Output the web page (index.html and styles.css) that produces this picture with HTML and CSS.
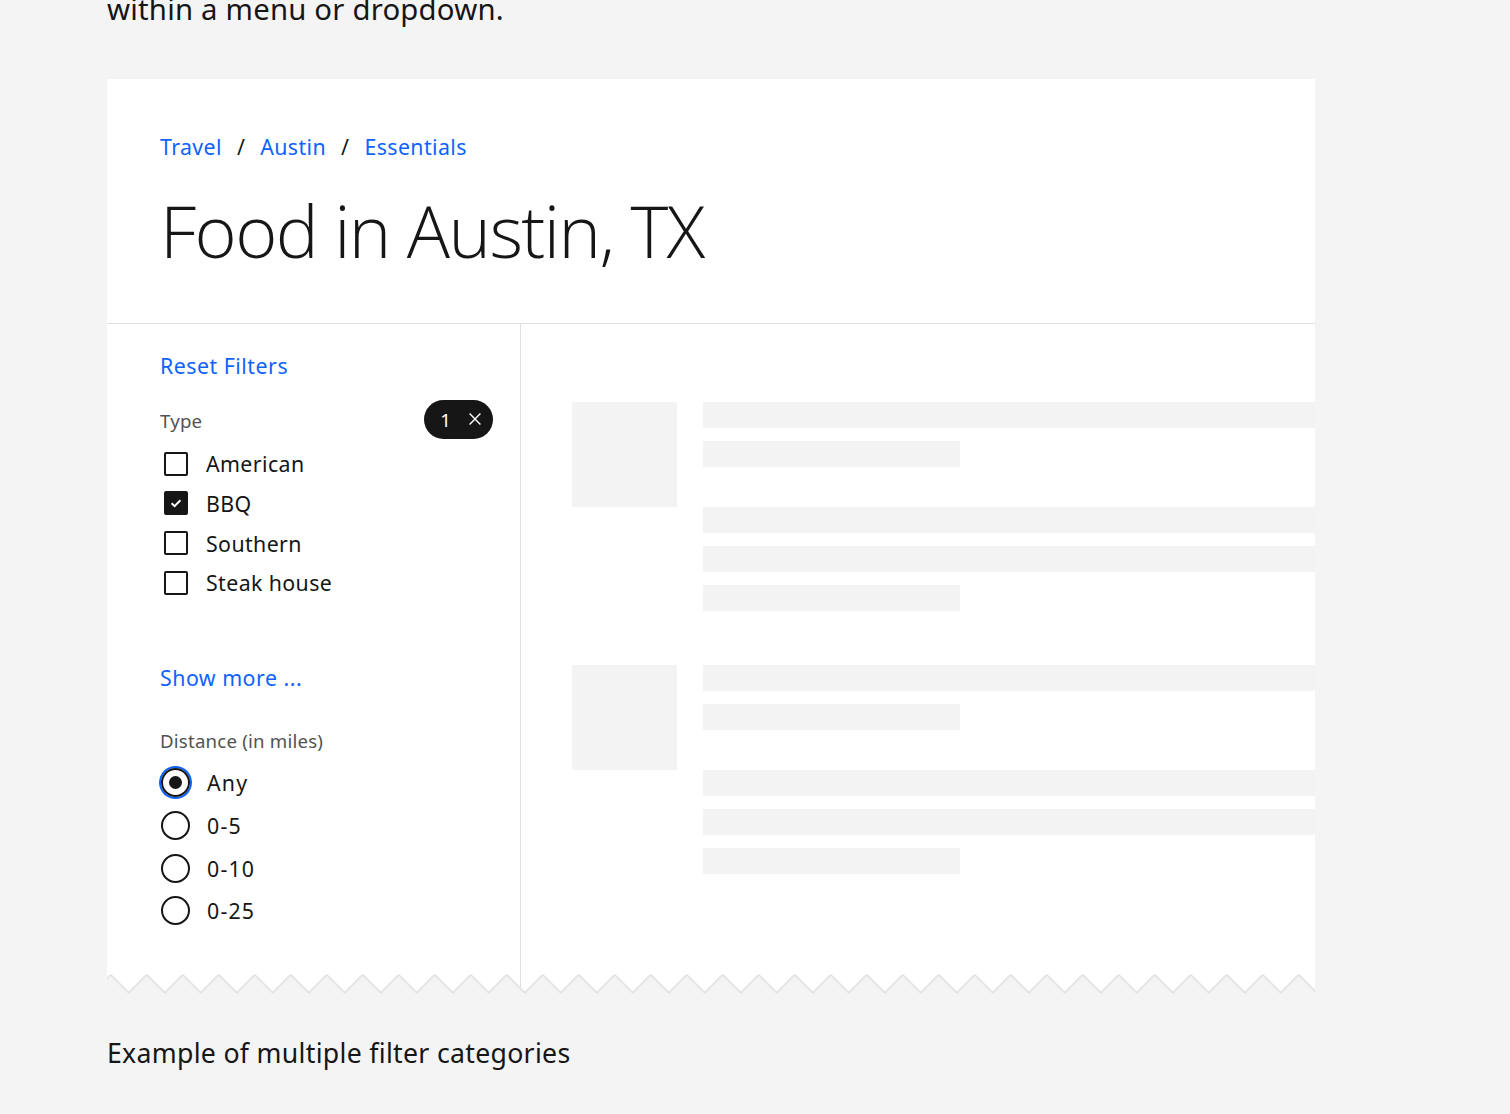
FILE: index.html
```html
<!DOCTYPE html>
<html lang="en">
<head>
<meta charset="utf-8">
<title>Filter categories</title>
<link rel="stylesheet" href="styles.css">
</head>
<body>
<main class="page">
  <p class="intro">within a menu or dropdown.</p>

  <section class="card">
    <header class="card-header">
      <nav class="breadcrumb">
        <a class="crumb" href="#">Travel</a><span class="sep">/</span>
        <a class="crumb" href="#">Austin</a><span class="sep">/</span>
        <a class="crumb" href="#">Essentials</a>
      </nav>
      <h1 class="title">Food in Austin, TX</h1>
    </header>

    <div class="card-body">
      <aside class="sidebar">
        <a class="link reset" href="#">Reset Filters</a>

        <div class="group-head">
          <span class="group-label">Type</span>
          <span class="tag">1
            <svg class="tag-x" width="16" height="16" viewBox="0 0 16 16"><path d="M1.8 1.8 L14.2 14.2 M14.2 1.8 L1.8 14.2" stroke="#fff" stroke-width="1.6" fill="none"/></svg>
          </span>
        </div>
        <ul class="checks">
          <li class="check-row"><span class="box"></span><span class="check-label">American</span></li>
          <li class="check-row"><span class="box checked"><svg width="16" height="16" viewBox="0 0 16 16"><path d="M3.6 8.2 L6.6 11.1 L12.4 5.2" stroke="#fff" stroke-width="2" fill="none"/></svg></span><span class="check-label">BBQ</span></li>
          <li class="check-row"><span class="box"></span><span class="check-label">Southern</span></li>
          <li class="check-row"><span class="box"></span><span class="check-label">Steak house</span></li>
        </ul>

        <a class="link more" href="#">Show more ...</a>

        <div class="group-label distance">Distance (in miles)</div>
        <ul class="radios">
          <li class="radio-row"><span class="radio selected"></span><span class="radio-label">Any</span></li>
          <li class="radio-row"><span class="radio"></span><span class="radio-label">0-5</span></li>
          <li class="radio-row"><span class="radio"></span><span class="radio-label">0-10</span></li>
          <li class="radio-row"><span class="radio"></span><span class="radio-label">0-25</span></li>
        </ul>
      </aside>

      <div class="results">
        <div class="sk-item">
          <div class="sk-square"></div>
          <div class="sk-lines">
            <div class="sk-set">
              <div class="sk-bar"></div>
              <div class="sk-bar short"></div>
            </div>
            <div class="sk-set">
              <div class="sk-bar"></div>
              <div class="sk-bar"></div>
              <div class="sk-bar short"></div>
            </div>
          </div>
        </div>
        <div class="sk-item">
          <div class="sk-square"></div>
          <div class="sk-lines">
            <div class="sk-set">
              <div class="sk-bar"></div>
              <div class="sk-bar short"></div>
            </div>
            <div class="sk-set">
              <div class="sk-bar"></div>
              <div class="sk-bar"></div>
              <div class="sk-bar short"></div>
            </div>
          </div>
        </div>
      </div>
    </div>

    <svg class="zigzag" width="100%" height="27" aria-hidden="true">
      <defs>
        <pattern id="zz" x="3.7" y="0" width="36" height="27" patternUnits="userSpaceOnUse">
          <path d="M0 0.8 L18 18.8 L36 0.8 L36 27 L0 27 Z" fill="#f4f4f4"/>
          <path d="M0 0.8 L18 18.8 L36 0.8" fill="none" stroke="#dedede" stroke-width="1.5"/>
        </pattern>
      </defs>
      <rect x="0" y="0" width="100%" height="27" fill="url(#zz)"/>
    </svg>
  </section>

  <p class="caption">Example of multiple filter categories</p>
</main>
</body>
</html>
```

FILE: styles.css
```css
* { box-sizing: border-box; }

html, body {
  margin: 0;
  padding: 0;
  background: #f4f4f4;
}

body {
  font-family: "Noto Sans", "Open Sans", "Liberation Sans", sans-serif;
  color: #161616;
  overflow: hidden;
  height: 1114px;
}

.page {
  padding-left: 107px;
  width: 1315px;
}

.intro {
  margin: -13px 0 0 0;
  font-size: 29.33px;
  line-height: 44px;
  letter-spacing: 0.2px;
}

.card {
  position: relative;
  margin-top: 48px;
  width: 1208px;
  background: #fff;
  overflow: hidden;
}

.card-header {
  padding: 54px 53px 49px;
  border-bottom: 1px solid #e0e0e0;
}

.breadcrumb {
  display: flex;
  align-items: center;
  font-size: 21.33px;
  line-height: 28px;
  letter-spacing: 0.4px;
}

.crumb {
  color: #0f62fe;
  text-decoration: none;
}

.sep {
  color: #161616;
  margin: 0 15px;
}

.title {
  margin: 25px 0 0;
  font-family: "Open Sans", "Noto Sans", sans-serif;
  font-size: 72px;
  font-weight: 300;
  line-height: 88px;
  letter-spacing: -1.6px;
}

.card-body {
  display: flex;
}

.sidebar {
  width: 414px;
  flex: none;
  padding: 28px 27px 69px 53px;
  border-right: 1px solid #e0e0e0;
  display: flex;
  flex-direction: column;
  align-items: flex-start;
}

.link {
  color: #0f62fe;
  text-decoration: none;
  font-size: 21.33px;
  line-height: 28px;
  letter-spacing: 0.5px;
}

.group-head {
  margin-top: 21px;
  width: 100%;
  display: flex;
  align-items: center;
  justify-content: space-between;
  height: 39px;
}

.group-label {
  color: #525252;
  font-size: 18.67px;
  line-height: 24px;
  letter-spacing: 0.2px;
}

.tag {
  display: inline-flex;
  align-items: center;
  gap: 17px;
  height: 39px;
  padding: 0 11px 0 16px;
  border-radius: 20px;
  background: #161616;
  color: #fff;
  font-size: 18.67px;
  margin-top: -3px;
}

.tag-x { display: block; width: 14px; height: 14px; }

.checks, .radios {
  list-style: none;
  margin: 0;
  padding: 0;
}

.checks { margin-top: 4px; }

.check-row {
  display: flex;
  align-items: center;
  height: 39.67px;
  font-size: 21.33px;
  letter-spacing: 0.4px;
}

.box {
  width: 24px;
  height: 24px;
  margin-left: 4px;
  border: 2px solid #161616;
  border-radius: 2px;
  display: flex;
  align-items: center;
  justify-content: center;
}

.box.checked {
  background: #161616;
}

.check-label {
  margin-left: 18px;
}

.more {
  margin-top: 61px;
}

.distance {
  margin-top: 37px;
}

.radios { margin-top: 9px; }

.radio-row {
  display: flex;
  align-items: center;
  height: 42.67px;
  font-size: 21.33px;
  letter-spacing: 1.2px;
}

.radio {
  width: 29px;
  height: 29px;
  margin-left: 1px;
  border: 2px solid #161616;
  border-radius: 50%;
  position: relative;
}

.radio.selected {
  box-shadow: 0 0 0 2px #0f62fe;
}

.radio.selected::after {
  content: "";
  position: absolute;
  left: 50%;
  top: 50%;
  width: 13px;
  height: 13px;
  margin: -6.5px 0 0 -6.5px;
  border-radius: 50%;
  background: #161616;
}

.radio-label {
  margin-left: 17px;
}

.results {
  flex: 1;
  padding: 78px 0 0 51px;
}

.sk-item {
  display: flex;
  gap: 26px;
  margin-bottom: 54px;
}

.sk-square {
  width: 105px;
  height: 105px;
  flex: none;
  background: #f3f3f3;
}

.sk-lines {
  flex: 1;
  display: flex;
  flex-direction: column;
  gap: 40px;
}

.sk-set {
  display: flex;
  flex-direction: column;
  gap: 13px;
}

.sk-bar {
  height: 26px;
  background: #f3f3f3;
}

.sk-bar.short {
  width: 257px;
}

.zigzag {
  position: absolute;
  left: 0;
  bottom: 0;
  display: block;
}

.caption {
  margin: 32px 0 0;
  font-size: 26.67px;
  line-height: 40px;
  letter-spacing: 0.3px;
}
```
